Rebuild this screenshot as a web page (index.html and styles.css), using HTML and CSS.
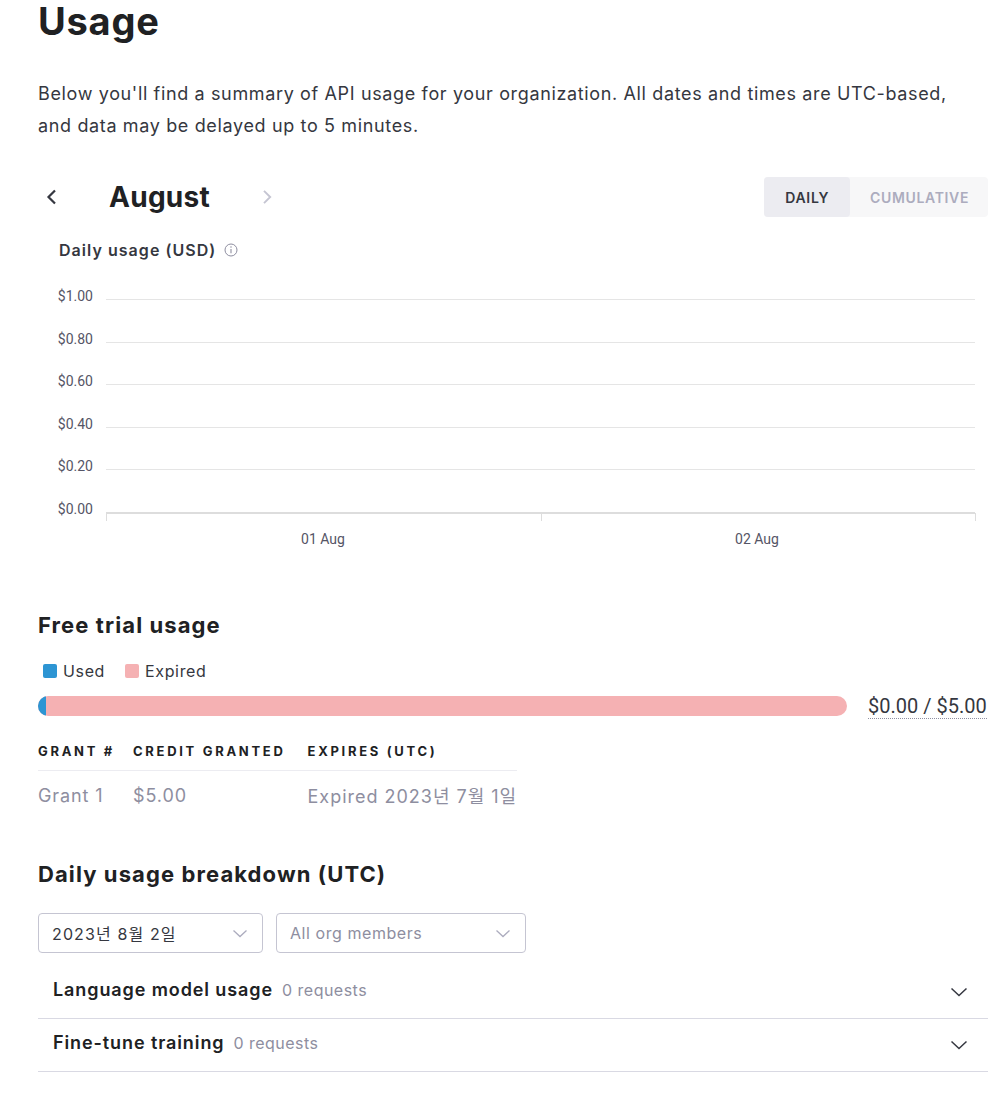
FILE: index.html
```html
<!DOCTYPE html>
<html>
<head>
<meta charset="utf-8">
<link rel="stylesheet" href="styles.css">
</head>
<body>
<main class="page">
  <h1 class="title">Usage</h1>
  <p class="intro">Below you'll find a summary of API usage for your organization. All dates and times are UTC-based, and data may be delayed up to 5 minutes.</p>

  <div class="month-bar">
    <div class="month-nav">
      <span class="nav-btn">
        <svg width="16" height="16" viewBox="0 0 16 16"><path d="M11 1.5 4.5 8l6.5 6.5" fill="none" stroke="#353740" stroke-width="2.2"/></svg>
      </span>
      <span class="month">August</span>
      <span class="nav-btn disabled">
        <svg width="16" height="16" viewBox="0 0 16 16"><path d="M5 1.8 11.2 8 5 14.2" fill="none" stroke="#c5c5d2" stroke-width="1.9"/></svg>
      </span>
    </div>
    <div class="toggle">
      <span class="seg active">Daily</span>
      <span class="seg">Cumulative</span>
    </div>
  </div>

  <div class="chart-title">Daily usage (USD)
    <svg class="info" width="14" height="14" viewBox="0 0 14 14"><circle cx="7" cy="7" r="6" fill="none" stroke="#8e8ea0" stroke-width="1"/><line x1="7" y1="6" x2="7" y2="10.2" stroke="#8e8ea0" stroke-width="1.1"/><circle cx="7" cy="4.1" r="0.75" fill="#8e8ea0"/></svg>
  </div>

  <div class="chart">
    <svg width="950" height="270" viewBox="0 0 950 270">
      <g class="grid" stroke="#e5e5e5" stroke-width="1">
        <line x1="68" y1="19.5" x2="937" y2="19.5"/>
        <line x1="68" y1="62.5" x2="937" y2="62.5"/>
        <line x1="68" y1="104.5" x2="937" y2="104.5"/>
        <line x1="68" y1="147.5" x2="937" y2="147.5"/>
        <line x1="68" y1="189.5" x2="937" y2="189.5"/>
      </g>
      <line x1="68" y1="233" x2="937" y2="233" stroke="#dddddd" stroke-width="2"/>
      <g stroke="#dddddd" stroke-width="1">
        <line x1="68.5" y1="233" x2="68.5" y2="241"/>
        <line x1="503.5" y1="233" x2="503.5" y2="241"/>
        <line x1="937.5" y1="233" x2="937.5" y2="241"/>
      </g>
      <g class="ylab" text-anchor="end">
        <text x="55" y="21">$1.00</text>
        <text x="55" y="64">$0.80</text>
        <text x="55" y="106">$0.60</text>
        <text x="55" y="149">$0.40</text>
        <text x="55" y="191">$0.20</text>
        <text x="55" y="234">$0.00</text>
      </g>
      <g class="xlab" text-anchor="middle">
        <text x="285" y="264">01 Aug</text>
        <text x="719" y="264">02 Aug</text>
      </g>
    </svg>
  </div>

  <section class="trial">
    <h2 class="h2">Free trial usage</h2>
    <div class="legend">
      <span class="key"><span class="swatch used"></span>Used</span>
      <span class="key"><span class="swatch expired"></span>Expired</span>
    </div>
    <div class="bar-row">
      <div class="bar"><div class="bar-used" style="width:1%"></div></div>
      <span class="amount">$0.00 / $5.00</span>
    </div>
    <table class="grants">
      <thead>
        <tr><th>Grant #</th><th>Credit granted</th><th>Expires (UTC)</th></tr>
      </thead>
      <tbody>
        <tr><td>Grant 1</td><td>$5.00</td><td>Expired 2023년 7월 1일</td></tr>
      </tbody>
    </table>
  </section>

  <section class="breakdown">
    <h2 class="h2">Daily usage breakdown (UTC)</h2>
    <div class="filters">
      <div class="select date">
        <span class="sel-text">2023년 8월 2일</span>
        <svg width="16" height="16" viewBox="0 0 16 16"><path d="M1.5 5.5 8 11.5l6.5-6" fill="none" stroke="#acacbe" stroke-width="1.3"/></svg>
      </div>
      <div class="select members">
        <span class="sel-text placeholder">All org members</span>
        <svg width="16" height="16" viewBox="0 0 16 16"><path d="M1.5 5.5 8 11.5l6.5-6" fill="none" stroke="#acacbe" stroke-width="1.3"/></svg>
      </div>
    </div>
    <div class="acc">
      <div class="acc-row">
        <div class="acc-label"><span class="acc-title">Language model usage</span><span class="acc-count">0 requests</span></div>
        <svg width="20" height="20" viewBox="0 0 20 20"><path d="M2.5 6.5 10 13.5l7.5-7" fill="none" stroke="#353740" stroke-width="1.5"/></svg>
      </div>
      <div class="acc-row">
        <div class="acc-label"><span class="acc-title">Fine-tune training</span><span class="acc-count">0 requests</span></div>
        <svg width="20" height="20" viewBox="0 0 20 20"><path d="M2.5 6.5 10 13.5l7.5-7" fill="none" stroke="#353740" stroke-width="1.5"/></svg>
      </div>
    </div>
  </section>
</main>
</body>
</html>
```

FILE: styles.css
```css
* { box-sizing: border-box; }
html, body { margin: 0; padding: 0; background: #fff; }
body {
  font-family: Inter, "Noto Sans CJK KR", sans-serif;
  color: #353740;
  letter-spacing: 0.04em;
}
.page {
  width: 950px;
  margin-left: 38px;
  padding-bottom: 30px;
}
.title {
  margin: 0;
  font-size: 38px;
  line-height: 43px;
  font-weight: 700;
  color: #202123;
  letter-spacing: 0.02em;
}
.intro {
  margin: 35px 0 0;
  max-width: 925px;
  font-size: 18px;
  line-height: 32px;
  color: #353740;
}
.month-bar {
  margin-top: 35px;
  display: flex;
  justify-content: space-between;
  align-items: center;
}
.month-nav {
  display: flex;
  align-items: center;
}
.nav-btn {
  display: flex;
  width: 32px;
  height: 32px;
  align-items: center;
  justify-content: center;
}
.nav-btn:first-child { margin-left: -2px; }
.month {
  font-size: 28px;
  font-weight: 700;
  color: #202123;
  letter-spacing: 0.01em;
  margin: 0 41px 0 41px;
}
.toggle {
  display: flex;
  background: #f7f7f8;
  border-radius: 4px;
  height: 40px;
}
.seg {
  display: flex;
  align-items: center;
  padding: 0 19px 0 20px;
  font-size: 14px;
  font-weight: 600;
  text-transform: uppercase;
  color: #acacbe;
}
.seg.active {
  padding: 0 21px;
  background: #ececf1;
  color: #353740;
  border-radius: 4px;
}
.chart-title {
  margin: 23px 0 0 21px;
  font-size: 16px;
  font-weight: 600;
  color: #353740;
  letter-spacing: 0.065em;
  display: flex;
  align-items: center;
  gap: 8px;
}
.chart {
  margin-top: 20px;
}
.chart svg { display: block; }
.ylab text, .xlab text {
  font-family: Roboto, sans-serif;
  font-size: 14px;
  letter-spacing: 0;
  fill: #555566;
}
.trial { margin-top: 60px; }
.h2 {
  margin: 0;
  font-size: 22px;
  line-height: 30px;
  font-weight: 700;
  color: #202123;
  letter-spacing: 0.05em;
}
.legend {
  margin-top: 21px;
  display: flex;
  gap: 20px;
  padding-left: 5px;
  font-size: 16px;
  line-height: 20px;
}
.key {
  display: flex;
  align-items: center;
  gap: 6px;
}
.swatch {
  width: 14px;
  height: 14px;
  border-radius: 2px;
}
.swatch.used { background: #2d95d3; }
.swatch.expired { background: #f5b1b3; }
.bar-row {
  margin-top: 11px;
  display: flex;
  align-items: center;
  gap: 21px;
}
.bar {
  width: 809px;
  height: 20px;
  background: #f5b1b3;
  border-radius: 10px;
  overflow: hidden;
}
.bar-used {
  height: 100%;
  background: #2d95d3;
}
.amount {
  font-family: Roboto, sans-serif;
  font-size: 20px;
  letter-spacing: 0;
  color: #353740;
  border-bottom: 1px dotted #8e8ea0;
  line-height: 24px;
  margin-top: 2px;
}
.grants {
  margin-top: 24px;
  border-collapse: collapse;
}
.grants th {
  text-align: left;
  font-size: 13px;
  font-weight: 700;
  text-transform: uppercase;
  letter-spacing: 2.7px;
  color: #202123;
  padding: 0 18px 11px 0;
  border-bottom: 1px solid #ececf1;
}
.grants th:nth-child(2), .grants td:nth-child(2) { padding-right: 22px; }
.grants td {
  font-size: 18px;
  color: #8e8ea0;
  letter-spacing: 0.05em;
  padding: 11px 18px 0 0;
}
.grants td:last-child { letter-spacing: 0.055em; }
.grants th:last-child, .grants td:last-child { padding-right: 0; }
.breakdown { margin-top: 51px; }
.filters {
  margin-top: 24px;
  display: flex;
  gap: 13px;
}
.select {
  height: 40px;
  border: 1px solid #c5c5d2;
  border-radius: 4px;
  display: flex;
  align-items: center;
  justify-content: space-between;
  padding: 0 14px 0 13px;
  font-size: 16px;
  letter-spacing: 0.05em;
}
.select.date { width: 225px; }
.select.members { width: 250px; }
.sel-text { color: #353740; }
.date .sel-text { letter-spacing: 0.07em; }
.sel-text.placeholder { color: #8e8ea0; letter-spacing: 0.035em; }
.acc { margin-top: 13px; }
.acc-row {
  height: 53px;
  display: flex;
  align-items: center;
  justify-content: space-between;
  padding: 0 19px 0 15px;
  border-bottom: 1px solid #d9d9e3;
}
.acc-label {
  display: flex;
  align-items: baseline;
  gap: 9px;
  margin-top: -5px;
}
.acc-title {
  font-size: 18px;
  font-weight: 600;
  color: #202123;
  letter-spacing: 0.05em;
}
.acc-count {
  font-size: 16px;
  color: #8e8ea0;
  letter-spacing: 0.03em;
}
```
